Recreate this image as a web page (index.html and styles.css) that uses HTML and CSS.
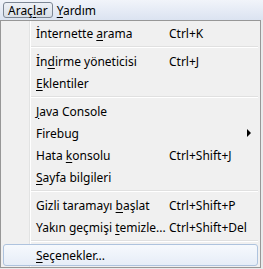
FILE: index.html
```html
<!DOCTYPE html>
<html lang="tr">
<head>
  <meta charset="UTF-8">
  <title>Araçlar</title>
  <link rel="stylesheet" href="styles.css">
</head>
<body>
  <div class="menubar">
    <span class="menubar-item active">Araç<u>l</u>ar</span>
    <span class="menubar-item"><u>Y</u>ardım</span>
  </div>

  <div class="menu">
    <div class="item"><span class="label">İnternette <u>a</u>rama</span><span class="key">Ctrl+K</span></div>
    <div class="sep"></div>
    <div class="item"><span class="label">İn<u>d</u>irme yöneticisi</span><span class="key">Ctrl+J</span></div>
    <div class="item"><span class="label"><u>E</u>klentiler</span></div>
    <div class="sep"></div>
    <div class="item"><span class="label"><u>J</u>ava Console</span></div>
    <div class="item"><span class="label">Firebug</span><span class="arrow"></span></div>
    <div class="item"><span class="label">Hata <u>k</u>onsolu</span><span class="key">Ctrl+Shift+J</span></div>
    <div class="item"><span class="label"><u>S</u>ayfa bilgileri</span></div>
    <div class="sep"></div>
    <div class="item"><span class="label">Gizli taramayı <u>b</u>aşlat</span><span class="key">Ctrl+Shift+P</span></div>
    <div class="item"><span class="label">Yakın geçmişi <u>t</u>emizle...</span><span class="key">Ctrl+Shift+Del</span></div>
    <div class="sep"></div>
    <div class="item hover"><span class="label"><u>S</u>eçenekler...</span></div>
  </div>
</body>
</html>
```

FILE: styles.css
```css
body {
  margin: 0;
  width: 263px;
  height: 269px;
  overflow: hidden;
  background: #e9eaec;
  font-family: "Noto Sans", "DejaVu Sans", sans-serif;
  font-size: 12px;
  color: #000;
}
u {
  text-decoration-thickness: 1px;
  text-underline-offset: 2px;
}

/* Menu bar */
.menubar {
  display: flex;
  align-items: center;
  height: 20px;
  padding-left: 3px;
  box-sizing: border-box;
  background: linear-gradient(#f1f4fa, #dbe3f1);
}
.menubar-item {
  height: 16px;
  line-height: 15px;
  padding: 0 4px 0 3px;
  border: 1px solid transparent;
  box-sizing: border-box;
}
.menubar-item.active {
  padding: 0 4px;
  border-color: #7d8795;
  border-radius: 3px;
  background: linear-gradient(#eef1f6, #d9dfe8);
}

/* Dropdown */
.menu {
  width: 261px;
  box-sizing: border-box;
  padding: 1px 2px;
  border: 1px solid #979797;
  background: linear-gradient(to right, #f0f0f0 28px, #e2e3e3 28px, #e2e3e3 29px, #fff 29px, #fff 30px, #f0f0f0 30px);
}
.item {
  display: flex;
  align-items: center;
  height: 22px;
  padding-left: 32px;
  border: 1px solid transparent;
  border-radius: 3px;
  box-sizing: border-box;
}
.label {
  width: 133px;
  flex-shrink: 0;
  white-space: nowrap;
}
.key {
  white-space: nowrap;
}
.arrow {
  margin-left: auto;
  margin-right: 6px;
  width: 0;
  height: 0;
  border-left: 4px solid #000;
  border-top: 4px solid transparent;
  border-bottom: 4px solid transparent;
}
.item.hover {
  border-color: #aec3de;
  background: linear-gradient(#f6f9fd, #e6edf7);
}
.sep {
  height: 6px;
  margin-left: 28px;
  background: linear-gradient(transparent 2px, #e0e0e0 2px, #e0e0e0 3px, #fff 3px, #fff 4px, transparent 4px);
}
```
